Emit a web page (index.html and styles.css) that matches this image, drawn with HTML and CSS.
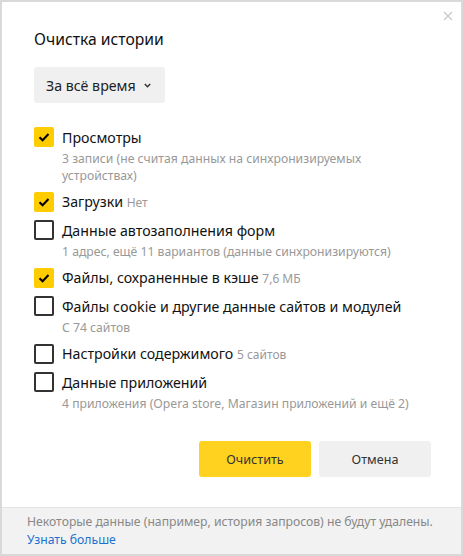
FILE: index.html
```html
<!DOCTYPE html>
<html lang="ru">
<head>
<meta charset="utf-8">
<link rel="stylesheet" href="styles.css">
</head>
<body>
<div class="dialog">
  <div class="main">
    <button class="close" aria-label="Закрыть">
      <svg width="10" height="10" viewBox="0 0 10 10"><path d="M1 1L9 9M9 1L1 9" stroke="#c8c8c8" stroke-width="1.2" fill="none"/></svg>
    </button>
    <h1 class="title">Очистка истории</h1>
    <div class="select">
      <span>За всё время</span>
      <svg class="chev" width="7" height="5" viewBox="0 0 7 5"><path d="M0.8 1L3.5 3.7L6.2 1" stroke="#333" stroke-width="1.5" fill="none"/></svg>
    </div>
    <ul class="list">
      <li class="item">
        <div class="row"><span class="box on"></span><span class="label">Просмотры</span></div>
        <div class="sub">3 записи (не считая данных на синхронизируемых<br>устройствах)</div>
      </li>
      <li class="item">
        <div class="row"><span class="box on"></span><span class="label">Загрузки <span class="note">Нет</span></span></div>
      </li>
      <li class="item">
        <div class="row"><span class="box"></span><span class="label">Данные автозаполнения форм</span></div>
        <div class="sub">1 адрес, ещё 11 вариантов (данные синхронизируются)</div>
      </li>
      <li class="item">
        <div class="row"><span class="box on"></span><span class="label">Файлы, сохраненные в кэше <span class="note">7,6 МБ</span></span></div>
      </li>
      <li class="item">
        <div class="row"><span class="box"></span><span class="label">Файлы cookie и другие данные сайтов и модулей</span></div>
        <div class="sub">С 74 сайтов</div>
      </li>
      <li class="item">
        <div class="row"><span class="box"></span><span class="label">Настройки содержимого <span class="note">5 сайтов</span></span></div>
      </li>
      <li class="item">
        <div class="row"><span class="box"></span><span class="label">Данные приложений</span></div>
        <div class="sub">4 приложения (Opera store, Магазин приложений и ещё 2)</div>
      </li>
    </ul>
    <div class="actions">
      <button class="btn primary">Очистить</button>
      <button class="btn">Отмена</button>
    </div>
  </div>
  <div class="footer">
    <div>Некоторые данные (например, история запросов) не будут удалены.</div>
    <a class="link" href="#">Узнать больше</a>
  </div>
</div>
</body>
</html>
```

FILE: styles.css
```css
* { box-sizing: border-box; }
html, body { margin: 0; }
body {
  background: #d9d9d9;
  padding: 2px;
  font-family: "Noto Sans", "Open Sans", sans-serif;
  color: #000;
}
.dialog {
  width: 459px;
  height: 552px;
  background: #fff;
  display: flex;
  flex-direction: column;
}
.main {
  position: relative;
  flex: 1;
  padding: 27px 30px 0 32px;
}
.close {
  position: absolute;
  top: 7px;
  right: 6px;
  width: 14px;
  height: 14px;
  padding: 0;
  border: 0;
  background: none;
  display: flex;
  align-items: center;
  justify-content: center;
}
.title {
  margin: 0;
  font-size: 15.7px;
  font-weight: normal;
  line-height: 20px;
  color: #111;
}
.select {
  margin-top: 18px;
  width: 131px;
  height: 36px;
  background: #f0f0f0;
  border-radius: 3px;
  display: flex;
  align-items: center;
  padding-left: 12px;
  gap: 8px;
  font-size: 14.2px;
  color: #222;
}
.chev { margin-top: 1px; }
.list {
  list-style: none;
  margin: 24px 0 0;
  padding: 0;
  display: flex;
  flex-direction: column;
  gap: 8px;
}
.row {
  display: flex;
  align-items: center;
  gap: 8px;
  height: 20px;
}
.box {
  width: 20px;
  height: 20px;
  border: 2px solid #333;
  border-radius: 2px;
  flex: none;
}
.box.on {
  border: 0;
  background: #ffcc00 url("data:image/svg+xml,%3Csvg xmlns='http://www.w3.org/2000/svg' width='20' height='20'%3E%3Cpath d='M5.5 10.2L8.6 13.3L14.5 7' stroke='%23000' stroke-width='2' fill='none'/%3E%3C/svg%3E") center/20px 20px no-repeat;
}
.label {
  font-size: 14.2px;
  line-height: 20px;
  white-space: nowrap;
  color: #111;
  padding-top: 1px;
}
.note {
  font-size: 12px;
  color: #999;
}
.sub {
  margin-top: 3px;
  padding-left: 28px;
  font-size: 12.2px;
  line-height: 17px;
  color: #999;
}
.actions {
  margin-top: 29px;
  display: flex;
  justify-content: flex-end;
  gap: 8px;
}
.btn {
  width: 112px;
  height: 36px;
  border: 0;
  border-radius: 3px;
  background: #f0f0f0;
  font-family: inherit;
  font-size: 12.6px;
  color: #333;
}
.btn.primary { background: #ffd21f; }
.footer {
  height: 47px;
  background: #f2f2f2;
  border-top: 1px solid #e4e4e4;
  padding: 5px 25px 0;
  font-size: 12.2px;
  line-height: 18px;
  color: #888;
}
.link {
  color: #1a73d0;
  text-decoration: none;
}
```
